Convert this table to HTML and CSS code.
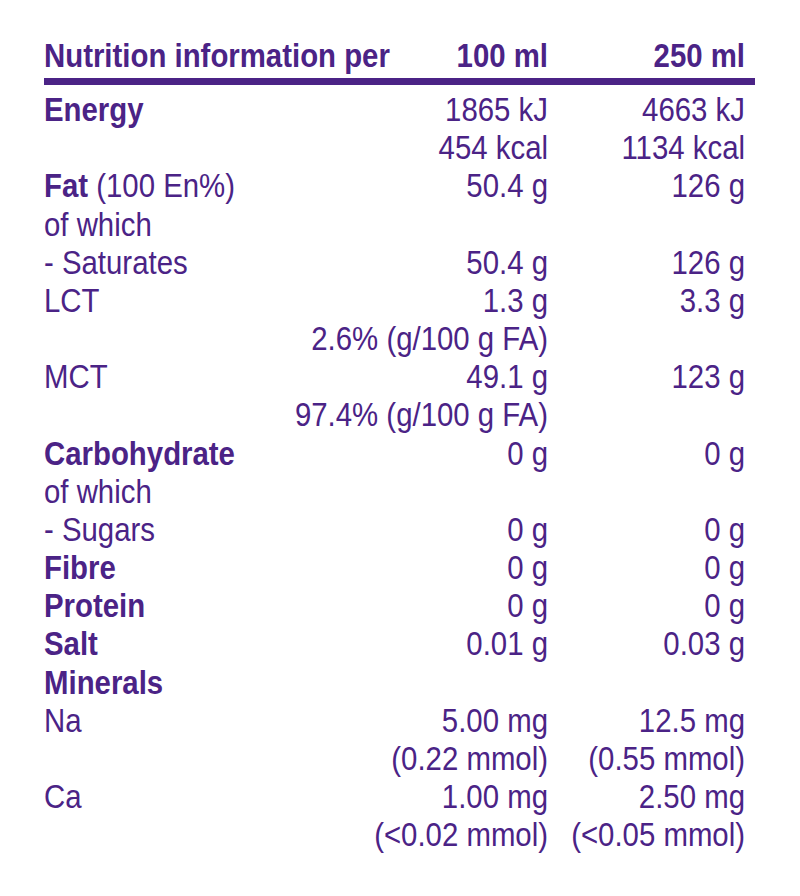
FILE: index.html
```html
<!DOCTYPE html>
<html>
<head>
<meta charset="utf-8">
<link rel="stylesheet" href="styles.css">
</head>
<body>
<div class="panel">
  <div class="head">
    <div class="lbl b">Nutrition information per</div>
    <div class="v b">100 ml</div>
    <div class="v b">250 ml</div>
  </div>
  <div class="rule"></div>
  <div class="grid">
    <div class="lbl b">Energy</div><div class="v">1865 kJ</div><div class="v">4663 kJ</div>
    <div class="lbl"></div><div class="v">454 kcal</div><div class="v">1134 kcal</div>
    <div class="lbl"><span class="b">Fat</span> (100 En%)</div><div class="v">50.4 g</div><div class="v">126 g</div>
    <div class="lbl">of which</div><div class="v"></div><div class="v"></div>
    <div class="lbl">- Saturates</div><div class="v">50.4 g</div><div class="v">126 g</div>
    <div class="lbl">LCT</div><div class="v">1.3 g</div><div class="v">3.3 g</div>
    <div class="v span">2.6% (g/100 g FA)</div><div class="v"></div>
    <div class="lbl">MCT</div><div class="v">49.1 g</div><div class="v">123 g</div>
    <div class="v span">97.4% (g/100 g FA)</div><div class="v"></div>
    <div class="lbl b">Carbohydrate</div><div class="v">0 g</div><div class="v">0 g</div>
    <div class="lbl">of which</div><div class="v"></div><div class="v"></div>
    <div class="lbl">- Sugars</div><div class="v">0 g</div><div class="v">0 g</div>
    <div class="lbl b">Fibre</div><div class="v">0 g</div><div class="v">0 g</div>
    <div class="lbl b">Protein</div><div class="v">0 g</div><div class="v">0 g</div>
    <div class="lbl b">Salt</div><div class="v">0.01 g</div><div class="v">0.03 g</div>
    <div class="lbl b">Minerals</div><div class="v"></div><div class="v"></div>
    <div class="lbl">Na</div><div class="v">5.00 mg</div><div class="v">12.5 mg</div>
    <div class="lbl"></div><div class="v">(0.22 mmol)</div><div class="v">(0.55 mmol)</div>
    <div class="lbl">Ca</div><div class="v">1.00 mg</div><div class="v">2.50 mg</div>
    <div class="lbl"></div><div class="v">(&lt;0.02 mmol)</div><div class="v">(&lt;0.05 mmol)</div>
  </div>
</div>
</body>
</html>
```
FILE: styles.css
```css
html, body {
  margin: 0;
  background: #ffffff;
}
body {
  font-family: "Liberation Sans", Arial, sans-serif;
  color: #4b2386;
  font-size: 33px;
  line-height: 38.15px;
}
.panel {
  width: 711px;
  margin: 0 0 0 44px;
  padding-top: 37px;
}
.head, .grid {
  display: grid;
  grid-template-columns: minmax(0, 1fr) 200px 197px;
  margin-right: 10px;
}
.grid {
  padding-top: 6px;
}
.rule {
  height: 7px;
  background: #4b2386;
  margin-top: 3px;
}
.b { font-weight: bold; }
.lbl, .v {
  white-space: nowrap;
  transform: scaleX(0.89);
}
.lbl {
  transform-origin: 0 50%;
}
.v {
  text-align: right;
  transform-origin: 100% 50%;
}
.span { grid-column: 1 / 3; }
```
